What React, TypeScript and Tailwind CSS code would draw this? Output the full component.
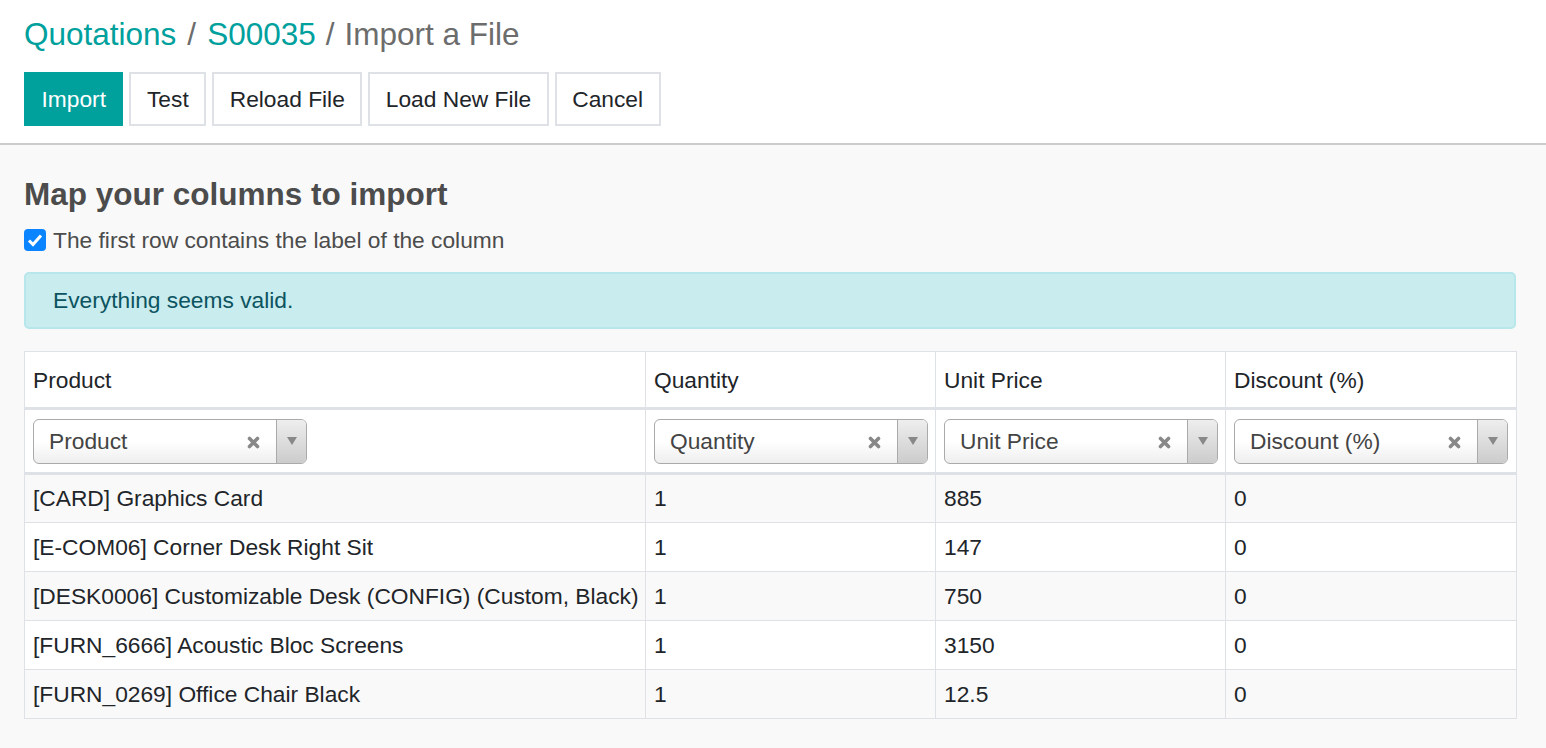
const columns = ['Product', 'Quantity', 'Unit Price', 'Discount (%)']

const rows = [
  ['[CARD] Graphics Card', '1', '885', '0'],
  ['[E-COM06] Corner Desk Right Sit', '1', '147', '0'],
  ['[DESK0006] Customizable Desk (CONFIG) (Custom, Black)', '1', '750', '0'],
  ['[FURN_6666] Acoustic Bloc Screens', '1', '3150', '0'],
  ['[FURN_0269] Office Chair Black', '1', '12.5', '0'],
]

const widths = ['w-[621px]', 'w-[290px]', 'w-[290px]', 'w-[291px]']

function FieldSelect({ label }: { label: string }) {
  return (
    <div className="flex h-[45px] w-[274px] overflow-hidden rounded-[6px] border border-[#aaaaaa] bg-gradient-to-b from-white from-50% to-[#eeeeee]">
      <div className="flex flex-1 items-center pl-[15px] text-[#444]">{label}</div>
      <div className="flex w-[46px] items-center justify-center pt-[2px]">
        <svg width="13" height="13" viewBox="0 0 13 13">
          <path d="M2.5 2.5 L10.5 10.5 M10.5 2.5 L2.5 10.5" stroke="#888" strokeWidth="3.6" strokeLinecap="round" />
        </svg>
      </div>
      <div className="flex w-[30px] items-center justify-center border-l border-[#aaaaaa] bg-gradient-to-b from-[#eeeeee] to-[#cccccc]">
        <svg width="10" height="8" viewBox="0 0 10 8">
          <path d="M0 0 L10 0 L5 8 Z" fill="#888" />
        </svg>
      </div>
    </div>
  )
}

export default function App() {
  return (
    <div className="min-h-[748px] bg-[#f9f9f9] font-['Liberation_Sans',Arial,sans-serif] text-[22.75px] text-[#212529]">
      <div className="border-b-2 border-[#cccccc] bg-white px-6 pt-[14px] pb-[17px]">
        <div className="text-[31.5px] leading-[40px] text-[#6c6c6c]">
          <span className="text-[#00a09d]">Quotations</span>
          <span className="mx-[11px]">/</span>
          <span className="text-[#00a09d]">S00035</span>
          <span className="mx-[10px]">/</span>
          <span>Import a File</span>
        </div>
        <div className="mt-[18px] flex gap-[6px]">
          <button className="h-[54px] border-2 border-[#00a09d] bg-[#00a09d] px-[15.5px] text-white">Import</button>
          <button className="h-[54px] border-2 border-[#dee2e6] bg-white px-[15.5px]">Test</button>
          <button className="h-[54px] border-2 border-[#dee2e6] bg-white px-[15.5px]">Reload File</button>
          <button className="h-[54px] border-2 border-[#dee2e6] bg-white px-[15.5px]">Load New File</button>
          <button className="h-[54px] border-2 border-[#dee2e6] bg-white px-[15.5px]">Cancel</button>
        </div>
      </div>

      <div className="pt-[29px] pr-[30px] pl-6">
        <h2 className="text-[31.5px] leading-[40px] font-bold text-[#4c4c4c]">Map your columns to import</h2>
        <label className="mt-[11px] flex items-center gap-[7px] leading-[30px] text-[#4c4c4c]">
          <span className="flex h-[22px] w-[22px] items-center justify-center rounded-[4px] bg-[#0a84ff]">
            <svg width="16" height="14" viewBox="0 0 16 14">
              <path d="M2 7.5 L6 11.5 L14 2.5" stroke="white" strokeWidth="3" fill="none" />
            </svg>
          </span>
          The first row contains the label of the column
        </label>

        <div className="mt-[17px] flex h-[57px] items-center rounded-[5px] border-2 border-[#b7e6eb] bg-[#c9ecef] px-[27px] text-[#0c5460]">
          Everything seems valid.
        </div>

        <table className="mt-[22px] w-[1492px] table-fixed border-collapse bg-white">
          <colgroup>
            {widths.map((w, i) => (
              <col key={i} className={w} />
            ))}
          </colgroup>
          <thead>
            <tr className="h-[57px] border border-[#dee2e6]">
              {columns.map((c) => (
                <th key={c} className="border-x border-[#dee2e6] px-[8px] pt-[2px] text-left font-normal">
                  {c}
                </th>
              ))}
            </tr>
            <tr className="h-[65px] border-x border-y-[3px] border-[#dee2e6]">
              {columns.map((c) => (
                <td key={c} className="border-x border-[#dee2e6] px-[8px]">
                  <FieldSelect label={c} />
                </td>
              ))}
            </tr>
          </thead>
          <tbody>
            {rows.map((r, i) => (
              <tr key={i} className={`h-[49px] border border-[#dee2e6] ${i % 2 === 0 ? 'bg-[#f9f9f9]' : 'bg-white'}`}>
                {r.map((c, j) => (
                  <td key={j} className="overflow-hidden border-x border-[#dee2e6] px-[8px] whitespace-nowrap">
                    {c}
                  </td>
                ))}
              </tr>
            ))}
          </tbody>
        </table>
      </div>
    </div>
  )
}
